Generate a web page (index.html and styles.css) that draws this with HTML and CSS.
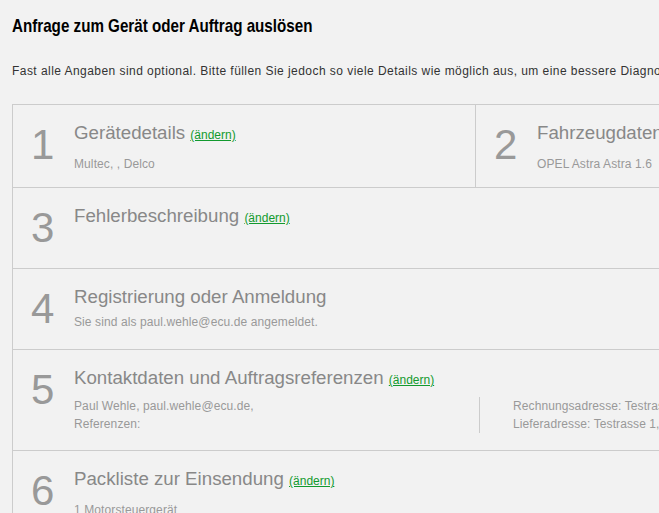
FILE: index.html
```html
<!DOCTYPE html>
<html lang="de">
<head>
    <meta charset="UTF-8">
    <meta name="viewport" content="width=device-width, initial-scale=1.0">
    <title>Anfrage auslösen</title>
    <link rel="stylesheet" href="styles.css">
</head>
<body>

<div class="head">
    <h1 class="title">Anfrage zum Gerät oder Auftrag auslösen</h1>
</div>

<p class="intro">Fast alle Angaben sind optional. Bitte füllen Sie jedoch so viele Details wie möglich aus, um eine bessere Diagnose zu ermöglichen.</p>

<div class="steps">
    <div class="step-row">
        <div class="step step-half">
            <div class="step-num">1</div>
            <div class="step-body">
                <h2>Gerätedetails <a href="#">(ändern)</a></h2>
                <p class="step-info">Multec, , Delco</p>
            </div>
        </div>
        <div class="step step-rest">
            <div class="step-num">2</div>
            <div class="step-body">
                <h2>Fahrzeugdaten <a href="#">(ändern)</a></h2>
                <p class="step-info">OPEL Astra Astra 1.6</p>
            </div>
        </div>
    </div>

    <div class="step">
        <div class="step-num">3</div>
        <div class="step-body">
            <h2>Fehlerbeschreibung <a href="#">(ändern)</a></h2>
        </div>
    </div>

    <div class="step">
        <div class="step-num">4</div>
        <div class="step-body">
            <h2>Registrierung oder Anmeldung</h2>
            <p class="step-info step-info-tight">Sie sind als paul.wehle@ecu.de angemeldet.</p>
        </div>
    </div>

    <div class="step">
        <div class="step-num">5</div>
        <div class="step-body">
            <h2>Kontaktdaten und Auftragsreferenzen <a href="#">(ändern)</a></h2>
            <div class="step-cols">
                <div class="col-left">
                    Paul Wehle, paul.wehle@ecu.de,<br>
                    Referenzen:
                </div>
                <div class="col-right">
                    Rechnungsadresse: Testrasse 1, 12345 Teststadt<br>
                    Lieferadresse: Testrasse 1, 12345 Teststadt
                </div>
            </div>
        </div>
    </div>

    <div class="step">
        <div class="step-num">6</div>
        <div class="step-body">
            <h2>Packliste zur Einsendung <a href="#">(ändern)</a></h2>
            <p class="step-info">1 Motorsteuergerät</p>
        </div>
    </div>
</div>

</body>
</html>
```

FILE: styles.css
```css
html {
    overflow: hidden;
}

body {
    margin: 0;
    padding: 0 12px;
    font-family: "Liberation Sans", Arial, sans-serif;
    background-color: #f2f2f2;
    color: #333;
}

.head {
    padding-top: 15px;
    height: 22px;
}

/* narrow bold headline, no Arial Narrow available */
.title {
    margin: 0;
    font-size: 18.6px;
    font-weight: bold;
    line-height: 22px;
    color: #000;
    white-space: nowrap;
    transform: scaleX(0.816);
    transform-origin: left center;
}

.intro {
    margin: 26px 0 0;
    font-size: 12px;
    line-height: 16px;
    letter-spacing: 0.45px;
    color: #333;
    white-space: nowrap;
}

.steps {
    width: 930px;
    margin-top: 25px;
    border: 1px solid #ccc;
    border-bottom: none;
}

.step-row {
    display: flex;
    border-bottom: 1px solid #ccc;
}

.step {
    display: flex;
    min-height: 80px;
    border-bottom: 1px solid #ccc;
}

.step-row .step {
    border-bottom: none;
}

.step-half {
    width: 462px;
    border-right: 1px solid #ccc;
}

.step-rest {
    flex: 1;
}

.step-num {
    flex: none;
    width: 43px;
    padding-left: 18px;
    margin-top: 19px;
    font-size: 42px;
    line-height: 1;
    color: #999;
}

.step-body {
    padding: 17px 0 14px;
}

.step-body h2 {
    margin: 0;
    font-size: 18.7px;
    font-weight: normal;
    line-height: 22px;
    color: #888;
    white-space: nowrap;
}

.step-body h2 a {
    font-size: 12px;
    color: #129a2e;
    text-decoration: underline;
}

.step-info {
    margin: 9px 0 0;
    font-size: 12px;
    line-height: 18px;
    letter-spacing: 0.1px;
    color: #999;
}

.step-info-tight {
    margin-top: 5px;
}

.step-cols {
    display: flex;
    margin: 6px 0 3px;
    font-size: 12px;
    line-height: 18px;
    letter-spacing: 0.1px;
    color: #999;
}

.col-left {
    width: 405px;
    border-right: 1px solid #ccc;
}

.col-right {
    padding-left: 33px;
    white-space: nowrap;
}
```
